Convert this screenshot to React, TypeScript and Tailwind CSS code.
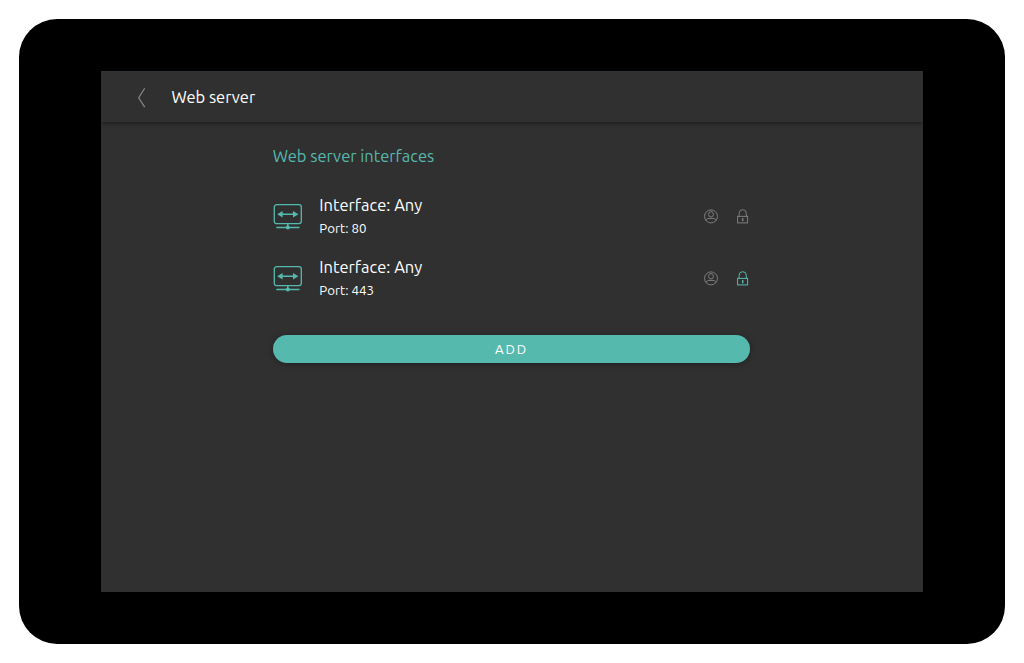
type IconProps = { className?: string };

function InterfaceIcon() {
  return (
    <svg width="30" height="28" viewBox="0 0 30 28" fill="none" stroke="#56b9ae" strokeWidth="1.3" className="mt-[2px] block shrink-0">
      <rect x="1.3" y="1.7" width="27" height="19" rx="2.4" />
      <path d="M7 11.2h16M14.8 20.7v4M3.3 24.5h23.2" strokeWidth="1.5" />
      <path d="M4.2 11.2 9.6 7.9v6.6zM25.4 11.2 20 7.9v6.6z" fill="#56b9ae" stroke="none" />
      <circle cx="14.8" cy="24.5" r="2" fill="#56b9ae" stroke="none" />
    </svg>
  );
}

function UserIcon() {
  return (
    <svg width="16" height="16" viewBox="0 0 16 16" fill="none" stroke="#7d7d7d" strokeWidth="1" className="block">
      <circle cx="8" cy="8.4" r="6.5" />
      <ellipse cx="8" cy="6.3" rx="2.4" ry="2.7" />
      <path d="M3.3 12.7c.1-1.5 1-2.3 2.7-2.3h4c1.7 0 2.6.8 2.7 2.3" />
    </svg>
  );
}

function LockIcon({ className }: IconProps) {
  return (
    <svg width="12" height="16" viewBox="0 0 12 16" fill="none" stroke="currentColor" className={`block ${className ?? ""}`}>
      <rect x="0.6" y="8.4" width="10" height="6.5" />
      <path d="M2.1 8.4V5.3a3.6 3.6 0 0 1 7.2 0v3.1" />
      <path d="M5.7 10.1v3.2" strokeWidth="1.5" />
    </svg>
  );
}

const entries = [
  { port: "80", secure: false },
  { port: "443", secure: true },
];

export default function App() {
  return (
    <div className="h-[663px] w-[1024px] bg-white pl-[19.3px] pt-[19.3px] font-['Ubuntu','Noto_Sans',sans-serif] text-white">
      <div className="h-[624.4px] w-[985.4px] rounded-[38px] bg-black pl-[81.7px] pt-[51.7px]">
        <div className="h-[521px] w-[822px] bg-[#303030]">
          <header className="flex h-[51px] items-center border-t border-[#30353a] pl-[36px] shadow-[0_1px_4px_rgba(0,0,0,0.5)]">
            <svg width="9" height="22" viewBox="0 0 9 22" fill="none" stroke="#888888" strokeWidth="1.2">
              <path d="M7.7 2.3 1.7 11.8l6 9.3" />
            </svg>
            <h1 className="ml-[25.4px] whitespace-nowrap text-[16.5px] leading-6">Web server</h1>
          </header>
          <main className="ml-[171.7px] w-[477.6px] pt-[22px]">
            <h2 className="h-6 whitespace-nowrap text-[16.5px] leading-6 text-[#56b9ae]">Web server interfaces</h2>
            <div className="pt-[17px]">
              {entries.map((entry) => (
                <div key={entry.port} className="flex h-[62px] items-center">
                  <InterfaceIcon />
                  <div className="ml-[16.7px] flex-1 pt-[2px]">
                    <div className="text-[16.5px] leading-6">Interface: Any</div>
                    <div className="text-[13.3px] leading-[23px]">Port: {entry.port}</div>
                  </div>
                  <div className="flex items-center gap-[18px] pr-[1.3px]">
                    <UserIcon />
                    <LockIcon className={entry.secure ? "text-[#56b9ae]" : "text-[#7d7d7d]"} />
                  </div>
                </div>
              ))}
            </div>
            <button className="mt-[25.6px] flex h-[28.4px] w-full items-center justify-center rounded-full bg-[#56b9ae] pt-[2px] text-[13.3px] tracking-[1.9px] shadow-[0_1px_6px_rgba(0,0,0,0.35)]">ADD</button>
          </main>
        </div>
      </div>
    </div>
  );
}
